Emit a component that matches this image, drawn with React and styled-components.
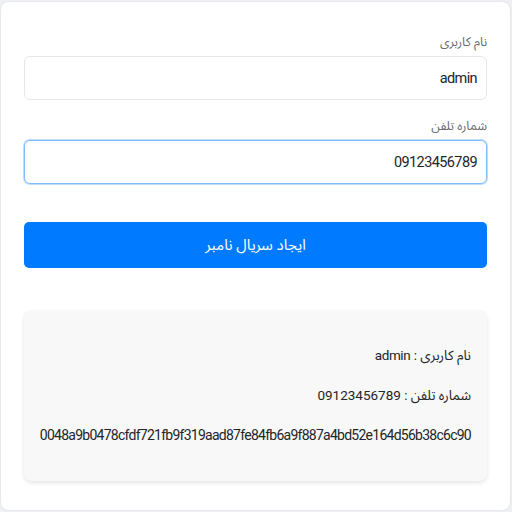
import React from "react";
import styled, { createGlobalStyle } from "styled-components";

const FONT = `Roboto, "Noto Sans Arabic", "DejaVu Sans", sans-serif`;

const Global = createGlobalStyle`
  html, body { margin: 0; padding: 0; background: #eef0f4; }
  body { font-family: ${FONT}; }
  * { box-sizing: border-box; }
`;

const Page = styled.div`
  width: 512px;
  height: 512px;
  padding: 2px 2px 2px 1px;
`;

const Card = styled.div`
  width: 509px;
  height: 508px;
  background: #ffffff;
  border-radius: 8px;
  box-shadow: 0 0 3px rgba(0, 0, 0, 0.08);
  padding: 30px 23px 28px 23px;
  direction: rtl;
  display: flex;
  flex-direction: column;
  overflow: hidden;
`;

const Field = styled.div`
  display: flex;
  flex-direction: column;
  margin-bottom: 16px;
`;

const Label = styled.label`
  font-family: ${FONT};
  font-size: 12.5px;
  color: #6b6b6b;
  line-height: 20px;
  margin-bottom: 4px;
`;

const Input = styled.input`
  width: 100%;
  height: 44px;
  border: 1px solid ${(p) => (p.$focused ? "#80bdff" : "#e6e6e6")};
  box-shadow: ${(p) => (p.$focused ? "0 0 0 1px rgba(0,123,255,0.25)" : "none")};
  border-radius: 6px;
  padding: 0 9px;
  font-family: ${FONT};
  font-size: 14.5px;
  letter-spacing: -0.6px;
  color: #212529;
  background: #fff;
  outline: none;
  text-align: right;
  direction: rtl;
`;

const Button = styled.button`
  margin-top: 22px;
  height: 46px;
  border: none;
  border-radius: 5px;
  background: #007bff;
  color: #fff;
  font-family: ${FONT};
  font-size: 15px;
  cursor: pointer;
`;

const Result = styled.div`
  margin-top: 42px;
  background: #f8f8f8;
  border-radius: 8px;
  box-shadow: 0 2px 4px rgba(0, 0, 0, 0.1);
  padding: 34px 16px 35px 16px;
  display: flex;
  flex-direction: column;
  gap: 18px;
`;

const Line = styled.div`
  font-family: ${FONT};
  font-size: ${(p) => (p.$mono ? "14px" : "13.5px")};
  letter-spacing: ${(p) => (p.$mono ? "-0.74px" : "-0.4px")};
  color: #212529;
  line-height: 22px;
  white-space: nowrap;
`;

export default function App() {
  return (
    <>
      <Global />
      <Page>
        <Card>
          <Field>
            <Label>نام کاربری</Label>
            <Input defaultValue="admin" readOnly />
          </Field>
          <Field>
            <Label>شماره تلفن</Label>
            <Input defaultValue="09123456789" readOnly $focused />
          </Field>
          <Button>ایجاد سریال نامبر</Button>
          <Result>
            <Line>نام کاربری : admin</Line>
            <Line>شماره تلفن : 09123456789</Line>
            <Line $mono>0048a9b0478cfdf721fb9f319aad87fe84fb6a9f887a4bd52e164d56b38c6c90</Line>
          </Result>
        </Card>
      </Page>
    </>
  );
}
